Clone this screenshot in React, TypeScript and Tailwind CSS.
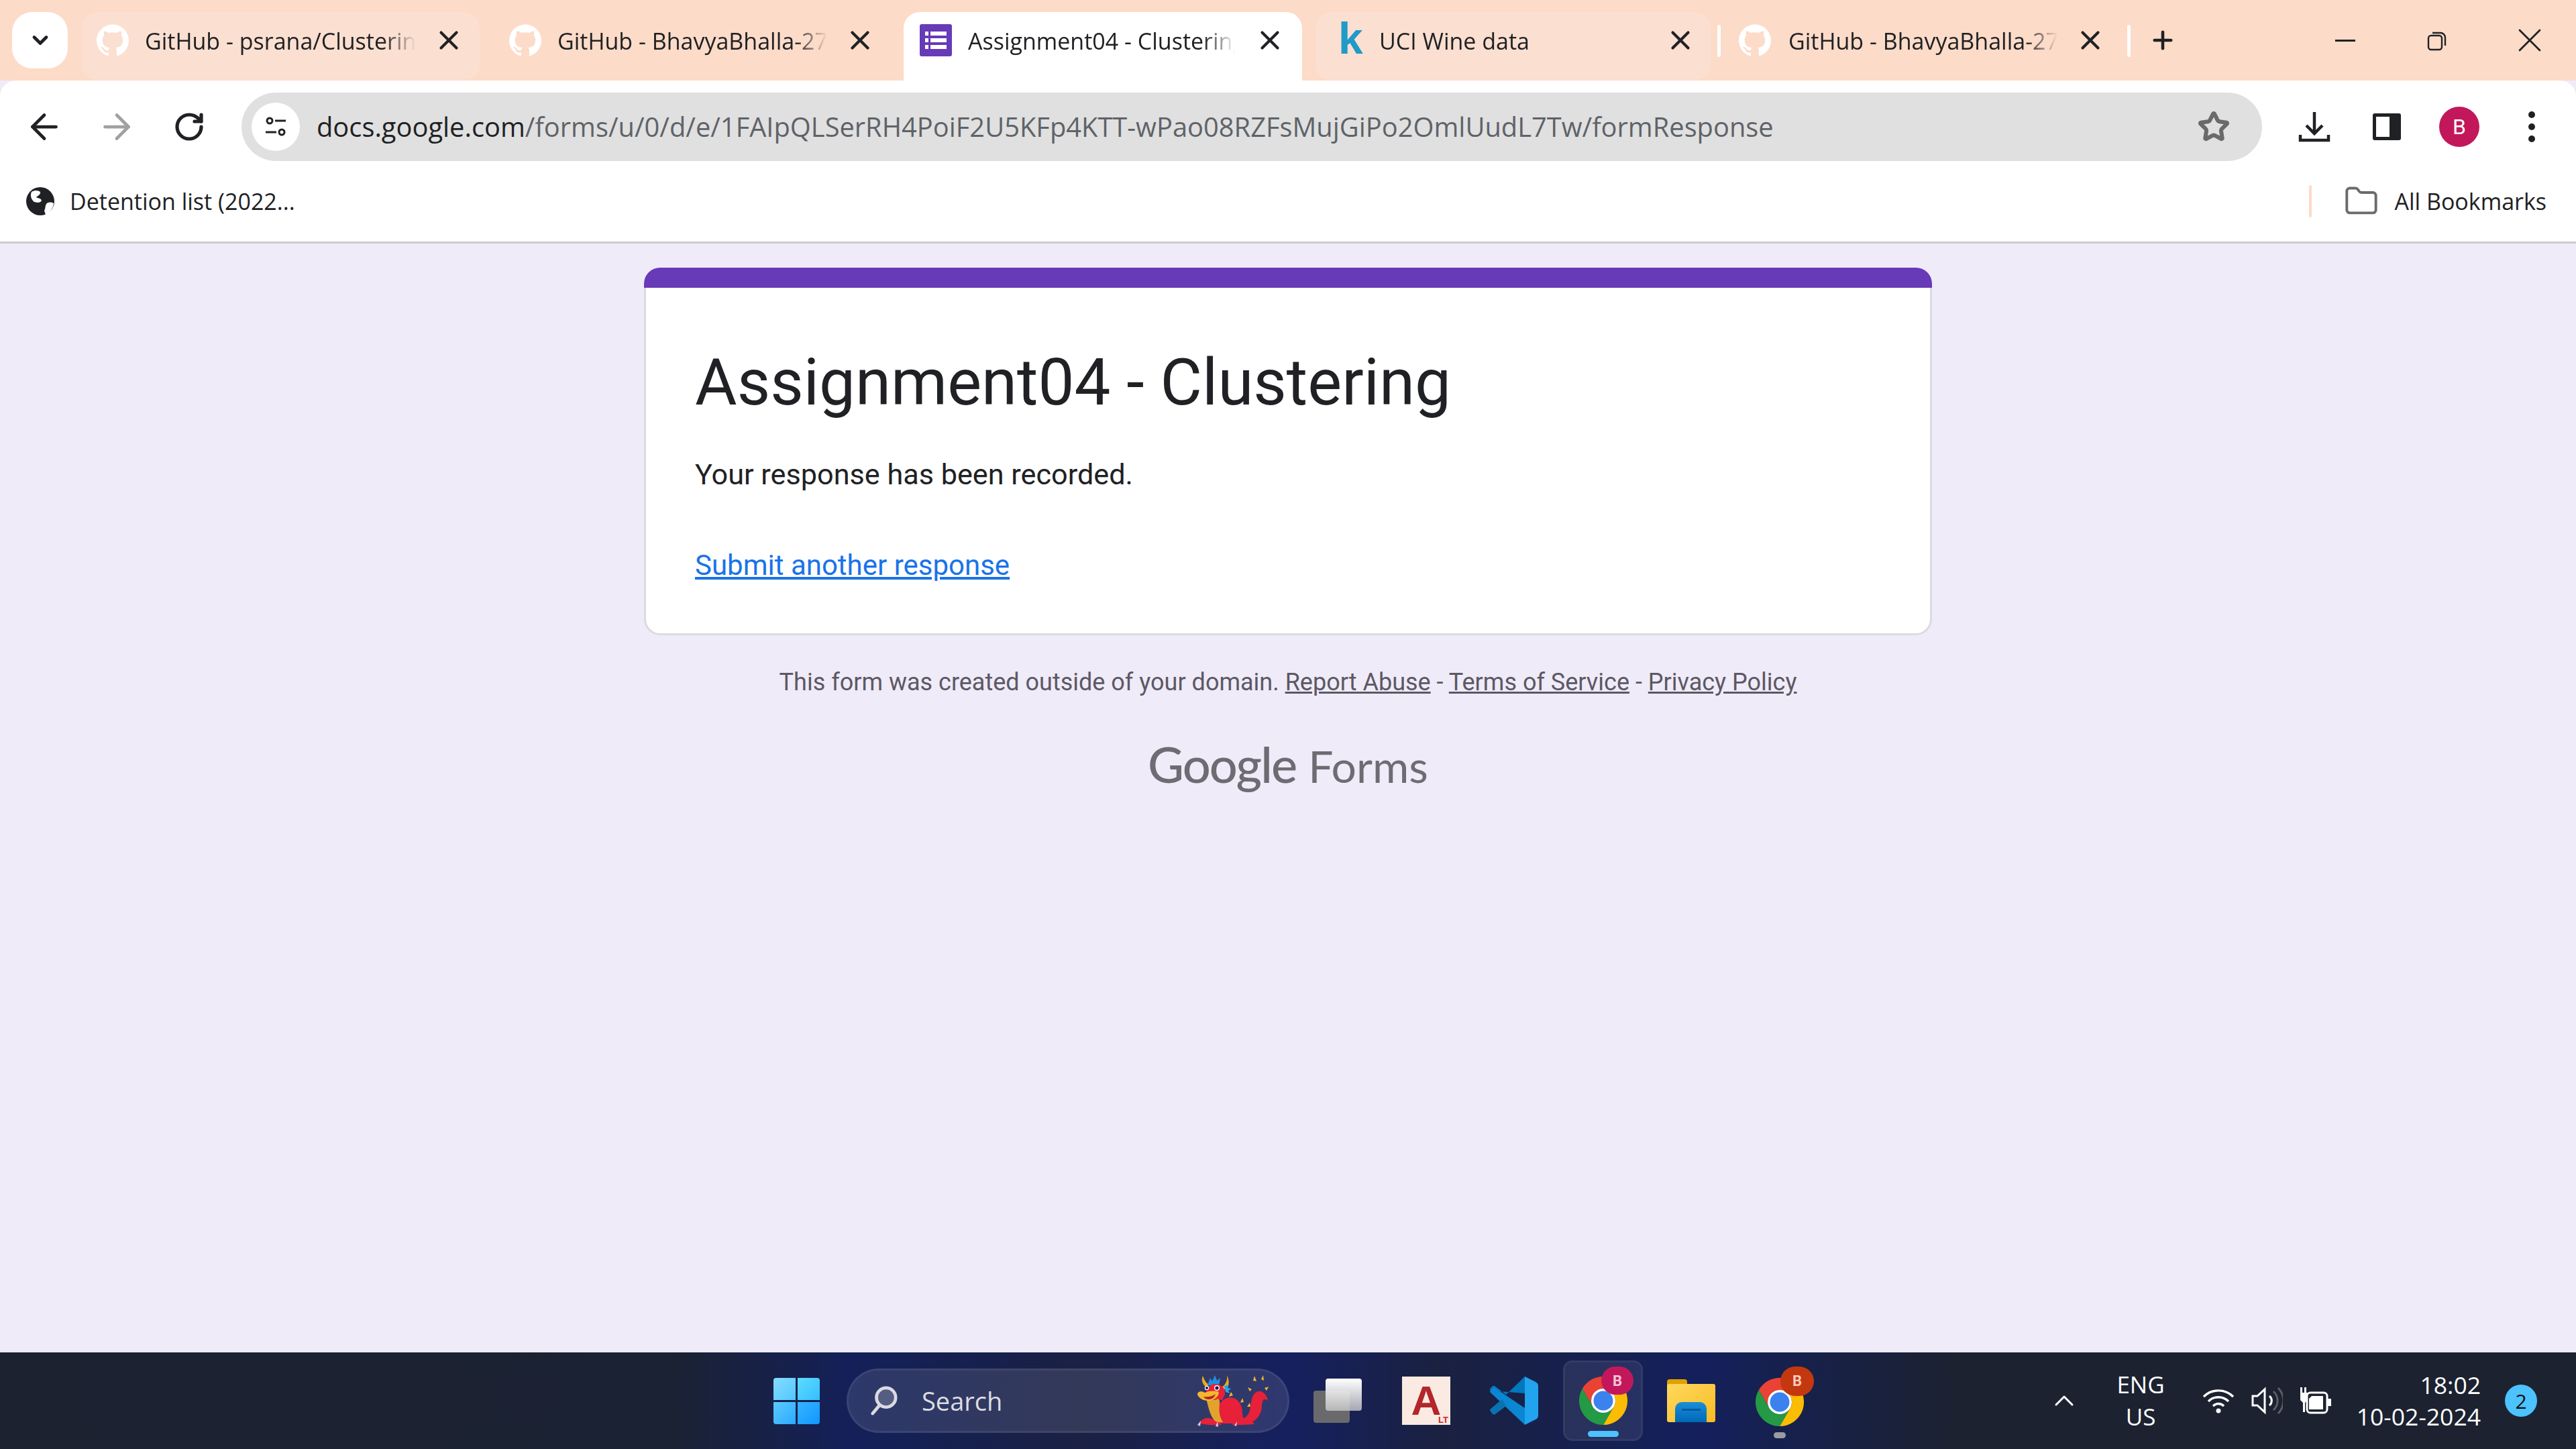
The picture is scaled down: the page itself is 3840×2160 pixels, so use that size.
import React from "react";
import { ArrowLeft, ArrowRight, RotateCw, Star, Plus, X, ChevronDown, ChevronUp, Folder } from "lucide-react";
import { SiGithub } from "react-icons/si";

const ui = "font-['Open_Sans','Noto_Sans',sans-serif]";

const ChromeIcon = () => (
  <svg viewBox="0 0 72 72" className="w-[72px] h-[72px]">
    <path fill="#ea4335" d="M36 18H67.2A36 36 0 0 0 4.8 18L20.4 45A18 18 0 0 1 36 18Z" />
    <path fill="#fbbc04" transform="rotate(120 36 36)" d="M36 18H67.2A36 36 0 0 0 4.8 18L20.4 45A18 18 0 0 1 36 18Z" />
    <path fill="#249a45" transform="rotate(240 36 36)" d="M36 18H67.2A36 36 0 0 0 4.8 18L20.4 45A18 18 0 0 1 36 18Z" />
    <circle cx="36" cy="36" r="18" fill="#fff" />
    <circle cx="36" cy="36" r="14.5" fill="#3b82ef" />
  </svg>
);

const FormsIcon = () => (
  <svg viewBox="0 0 48 48" className="w-12 h-12 shrink-0">
    <rect width="48" height="48" rx="3" fill="#673ab7" />
    <path fill="#fff" d="M8 11h5v6H8zM16 11h24v6H16zM8 21h5v6H8zM16 21h24v6H16zM8 31h5v6H8zM16 31h24v6H16z" />
  </svg>
);

const Dragon = () => (
  <svg viewBox="0 0 107 78" className="w-[107px] h-[78px]">
    <path fill="#e8a820" d="M8 2c-3 6 0 14 6 17l3-4C12 12 10 7 8 2ZM44 1c1 8-2 14-8 18l3 4c8-3 10-12 5-22Z" />
    <path fill="#1f8fe0" d="M15 16 19 5l3 5 4-9 3 8 5-4-2 12Z" />
    <path fill="#2ea5e8" d="M40 17l7-2-2 5 5 1-4 3 2 4-6-2Z" />
    <path fill="#f3b62c" d="M47 33l3-7 3 5ZM64 42l3-7 2 6ZM78 25l-3-6 6 3ZM83 9l2-7 3 8ZM95 7l3-6 1 8ZM100 20l6-2-3 6ZM74 48l4-6 1 6ZM79 58l3-5 1 6Z" />
    <path fill="#e8203a" d="M13 30c-1-9 5-16 14-16s15 7 14 16l-4 8-20-1Z" />
    <path fill="#e8203a" d="M26 62c1-10 8-24 18-27 11-3 19 4 22 14 1 6 1 12 2 16 6-1 10-8 11-17 1-11 4-22 12-23 7-1 13 6 14 14-2-2-5-3-7-1-3 5-1 15-5 21-3 6-9 12-18 14H41l-13-1Z" />
    <path fill="#e8203a" d="M3 73c2-6 9-9 15-8l15 6 3 4H16l-6-1ZM52 75c1-6 7-10 13-9l17 4 3 4-17 1Z" />
    <path fill="#e3a22c" d="M13 36c4 3 11 3 18 0 3 3 2 5 2 7-1 10-1 19 5 28-7 1-12-1-14-4-6-9-8-20-11-31Z" />
    <path fill="#f5b62d" d="M0 30c0-5 6-6 11-3 5-3 14-3 20-2 3 4-3 12-11 14-8 1-17-2-20-9Z" />
    <path fill="#b3202f" d="M9 33c6 1 13 0 18-4-2 6-6 8-10 8-3 0-6-1-8-4Z" />
    <circle cx="14" cy="20" r="3.2" fill="#fff" /><circle cx="14" cy="20" r="2" fill="#1a1a40" />
    <circle cx="29" cy="20" r="4" fill="#fff" /><circle cx="29" cy="20" r="2.6" fill="#1a1a40" />
    <path fill="#d6c8e8" d="M0 75l5-6-1 8ZM27 77l3-7 1 8ZM55 76l4-6-1 7Z" />
  </svg>
);

const Tab = ({ w, ml = "", icon, title, active = false, hover = false, iconGap, closeGap }: any) => (
  <div
    className={`relative flex items-start h-full shrink-0 ${w} ${ml} ${active ? "bg-white rounded-t-[24px]" : hover ? "h-[84px] bg-[#fbdfd0] rounded-[24px]" : ""}`}
  >
    <div className="flex items-center h-[84px] w-full">
      <div className={`flex items-center justify-center shrink-0 ${iconGap}`}>{icon}</div>
      <span className={`flex-1 overflow-hidden whitespace-nowrap text-[#202124] text-[34px] leading-[48px] pt-[2px] ${ui} [mask-image:linear-gradient(to_right,#000_88%,transparent_100%)]`}>
        {title}
      </span>
      <X className={`shrink-0 w-[46px] h-[46px] text-[#202124] ${closeGap}`} strokeWidth={2.2} />
    </div>
  </div>
);

const Ghub = () => <SiGithub className="w-12 h-12 text-white" />;

const TabStrip = () => (
  <div className="flex items-start h-[120px] shrink-0 bg-[#fcdbc8] pt-[18px] pl-[18px]">
    <div className="w-[83px] h-[84px] shrink-0 rounded-[30px] bg-white flex items-center justify-center">
      <ChevronDown className="w-[36px] h-[36px] text-[#202124]" strokeWidth={3.2} />
    </div>
    <Tab w="w-[593px]" ml="ml-[21px]" hover iconGap="pl-[22px] pr-[24px]" closeGap="ml-[26px] mr-[23px]" icon={<Ghub />} title="GitHub - psrana/Clustering-Methods" />
    <Tab w="w-[613px]" ml="ml-[19px]" iconGap="pl-[25px] pr-[24px]" closeGap="ml-[26px] mr-[42px]" icon={<Ghub />} title="GitHub - BhavyaBhalla-27/Clustering" />
    <Tab w="w-[594px]" active iconGap="pl-[24px] pr-[24px]" closeGap="ml-[29px] mr-[25px]" icon={<FormsIcon />} title="Assignment04 - Clustering" />
    <Tab w="w-[589px]" ml="ml-[20px]" hover iconGap="pl-[34px] pr-[36px]" closeGap="ml-[26px] mr-[22px]" icon={<span className="block w-[25px] text-[66px] leading-[60px] -mt-[6px] font-bold text-[#1f9ac9] font-['Liberation_Sans',sans-serif]">k</span>} title="UCI Wine data" />
    <div className="w-[5px] h-[48px] mt-[19px] ml-[10px] rounded bg-white shrink-0" />
    <Tab w="w-[579px]" ml="ml-[27px]" iconGap="pl-[0px] pr-[26px]" closeGap="ml-[26px] mr-[32px]" icon={<Ghub />} title="GitHub - BhavyaBhalla-27/Clustering" />
    <div className="w-[5px] h-[48px] mt-[19px] rounded bg-white shrink-0" />
    <Plus className="w-[42px] h-[42px] mt-[21px] ml-[27px] text-[#202124] shrink-0" strokeWidth={2.6} />
    <div className="flex-1 flex justify-end items-start">
      <div className="w-[30px] h-[3px] mt-[41px] bg-[#202124]" />
      <svg viewBox="0 0 30 30" className="w-[30px] h-[30px] mt-[28px] ml-[107px] text-[#202124]" fill="none" stroke="currentColor" strokeWidth="2.4">
        <rect x="2" y="7" width="20" height="21" rx="4" />
        <path d="M8 3h12a7 7 0 0 1 7 7v12" />
      </svg>
      <X className="w-[60px] h-[60px] mt-[12px] ml-[93px] mr-[39px] text-[#202124]" strokeWidth={1.1} />
    </div>
  </div>
);

const Toolbar = () => (
  <div className="flex items-center h-[120px] shrink-0 bg-white rounded-t-[24px] pt-[18px]">
    <ArrowLeft className="w-[60px] h-[60px] ml-[36px] text-[#202124]" strokeWidth={1.9} />
    <ArrowRight className="w-[60px] h-[60px] ml-[48px] text-[#a0a0a2]" strokeWidth={1.9} />
    <RotateCw className="w-[48px] h-[48px] ml-[54px] text-[#202124]" strokeWidth={2.6} />
    <div className="flex items-center h-[102px] w-[3012px] ml-[54px] rounded-[51px] bg-[#e0e0e0]">
      <div className="w-[72px] h-[72px] ml-[15px] rounded-full bg-white flex items-center justify-center shrink-0">
        <svg viewBox="0 0 36 36" className="w-[36px] h-[36px]" fill="none" stroke="#202124" strokeWidth="3">
          <circle cx="9" cy="9" r="4" />
          <path d="M17 9h16M3 26h16" />
          <circle cx="27" cy="26" r="4" />
        </svg>
      </div>
      <span className={`ml-[25px] flex-1 whitespace-nowrap text-[39.85px] ${ui} text-[#5f6368]`}>
        <span className="text-[#202124]">docs.google.com</span>/forms/u/0/d/e/1FAIpQLSerRH4PoiF2U5KFp4KTT-wPao08RZFsMujGiPo2OmlUudL7Tw/formResponse
      </span>
      <Star className="w-[48px] h-[48px] mr-[48px] text-[#6a6a6c]" strokeWidth={3} />
    </div>
    <svg viewBox="0 0 48 48" className="w-[48px] h-[48px] ml-[54px]" fill="none" stroke="#202124" strokeWidth="4.5">
      <path d="M24 2v30M12 22l12 12 12-12" />
      <path d="M3 36v8h42v-8" />
    </svg>
    <svg viewBox="0 0 44 44" className="w-[44px] h-[44px] ml-[62px]">
      <rect x="1" y="2" width="42" height="40" rx="3" fill="#202124" />
      <rect x="6" y="7" width="20" height="30" fill="#fff" />
    </svg>
    <div className="w-[60px] h-[60px] ml-[56px] rounded-full bg-[#c2185b] flex items-center justify-center text-white text-[32px] font-['Roboto',sans-serif]">B</div>
    <svg viewBox="0 0 12 48" className="w-[12px] h-[48px] ml-[72px]" fill="#202124">
      <circle cx="6" cy="6" r="5" /><circle cx="6" cy="24" r="5" /><circle cx="6" cy="42" r="5" />
    </svg>
  </div>
);

const BookmarksBar = () => (
  <div className="flex items-center h-[123px] shrink-0 bg-white border-b-[3px] border-[#cdcdcd]">
    <svg viewBox="0 0 42 42" className="w-[42px] h-[42px] ml-[39px]">
      <circle cx="21" cy="21" r="21" fill="#202124" />
      <path fill="#fff" d="M8 7c6-3 10-2 13 0 1 4-4 6-6 8 3 2 7 1 8 5-2 4-8 3-11 2C9 20 5 14 8 7ZM41 24c-4-2-8-2-11 1-2 3-1 7-3 10l2 6c6-2 11-9 12-17Z" />
    </svg>
    <span className={`ml-[23px] text-[34px] text-[#202124] ${ui}`}>Detention list (2022...</span>
    <div className="flex-1" />
    <div className="w-[4px] h-[48px] bg-[#fcdbc8] rounded" />
    <Folder className="w-[52px] h-[52px] ml-[48px] text-[#6b6b6d]" strokeWidth={1.8} />
    <span className={`ml-[23px] mr-[44px] text-[34px] text-[#202124] ${ui}`}>All Bookmarks</span>
  </div>
);

const FormCard = () => (
  <div className="w-[1920px] mx-auto mt-[36px] font-['Roboto',sans-serif]">
    <div className="h-[30px] rounded-t-[24px] bg-[#673ab7]" />
    <div className="h-[518px] bg-white border-x-[3px] border-b-[3px] border-[#dadce0] rounded-b-[24px] pl-[73px] pt-[81px]">
      <div className="text-[96px] leading-[120px] text-[#202124]">Assignment04 - Clustering</div>
      <div className="mt-[48px] text-[43.2px] leading-[60px] text-[#202124]">Your response has been recorded.</div>
      <a className="block mt-[75px] text-[42px] leading-[60px] text-[#1a73e8] underline">Submit another response</a>
    </div>
  </div>
);

const Footer = () => (
  <div className="w-[1920px] mx-auto flex flex-col items-center">
    <div className="mt-[46px] text-[36px] leading-[48px] text-[#5c5864] font-['Roboto',sans-serif]">
      This form was created outside of your domain. <a className="underline">Report Abuse</a> - <a className="underline">Terms of Service</a> - <a className="underline">Privacy Policy</a>
    </div>
    <div className="mt-[53px] flex items-baseline text-[#6e6c73] font-['Lato',sans-serif] leading-[90px]">
      <span className="text-[74px] font-medium tracking-[-2px]">Google</span>
      <span className="ml-[18px] text-[66px]">Forms</span>
    </div>
  </div>
);

const Taskbar = () => (
  <div className="relative h-[144px] shrink-0 flex items-center bg-[linear-gradient(to_right,#1c2230_0%,#1b2233_26%,#142059_33%,#1a2144_42%,#16205f_50%,#1a2140_56%,#14205c_66%,#1c2230_76%,#1c2230_100%)]">
    <div className="grid grid-cols-2 gap-[3px] w-[69px] h-[69px] ml-[1153px] shrink-0">
      <div className="rounded-tl-[4px] bg-gradient-to-br from-[#86dcff] to-[#4dc8ff]" />
      <div className="rounded-tr-[4px] bg-gradient-to-br from-[#5cdcff] to-[#36bdff]" />
      <div className="rounded-bl-[4px] bg-gradient-to-br from-[#5acbff] to-[#29aaff]" />
      <div className="rounded-br-[4px] bg-gradient-to-br from-[#34b4ff] to-[#0f97ff]" />
    </div>
    <div className="relative flex items-center w-[660px] h-[96px] ml-[40px] rounded-[48px] bg-[#ffffff1c] border-[3px] border-[#ffffff10] shrink-0">
      <svg viewBox="0 0 42 48" className="w-[40px] h-[46px] ml-[33px] shrink-0" fill="none" stroke="#dadbe2" strokeWidth="5">
        <circle cx="24" cy="19" r="15" fill="#ffffff30" />
        <path d="M13 32 3 44" strokeLinecap="round" />
      </svg>
      <span className="ml-[36px] text-[38px] text-[#dcdde2] font-['Open_Sans',sans-serif]">Search</span>
      <div className="absolute right-[27px] top-[6px]"><Dragon /></div>
    </div>
    <div className="relative ml-[36px] w-[72px] h-[66px] shrink-0">
      <div className="absolute left-0 bottom-0 w-[54px] h-[48px] rounded-[4px] bg-[#6a6a6c]" />
      <div className="absolute right-0 top-0 w-[54px] h-[48px] rounded-[4px] bg-gradient-to-b from-white to-[#c8c8c8cc]" />
    </div>
    <div className="relative ml-[60px] w-[72px] h-[72px] shrink-0 bg-[#faeae2] flex items-center justify-center">
      <span className="text-[62px] leading-none font-bold text-[#b3262a] font-['Liberation_Sans',sans-serif]">A</span>
      <span className="absolute right-[3px] bottom-[1px] text-[13px] leading-none font-bold text-[#d2232a] font-['Liberation_Sans',sans-serif]">LT</span>
    </div>
    <svg viewBox="0 0 72 72" className="w-[72px] h-[72px] ml-[59px] shrink-0">
      <path fill="#22a3ee" d="M52 0 68 8Q72 10 72 14V58Q72 62 68 64L52 72Z" />
      <path fill="#0078bd" d="M52 0 24 27 7 14Q5 13 3 15L1 17Q-1 19 1 21L52 25Z" />
      <path fill="#0a86d2" d="M52 72 1 24Q-1 22 2 20L6 16 52 47Z" />
      <path fill="#0a72b0" d="M1 48Q-1 50 1 52L3 55Q6 58 8 56L24 44 18 34Z" />
    </svg>
    <div className="relative ml-[37px] w-[119px] h-[120px] rounded-[14px] bg-[#ffffff14] border-[3px] border-[#ffffff0c] flex flex-col items-center pt-[21px] shrink-0">
      <ChromeIcon />
      <div className="absolute right-[11px] top-[6px] w-[48px] h-[42px] rounded-full bg-[#c2185b] flex items-center justify-center text-[#f4c6d8] text-[22px] font-bold font-['Roboto',sans-serif]">B</div>
      <div className="mt-[9px] w-[46px] h-[9px] rounded-[5px] bg-[#4cc2ff]" />
    </div>
    <div className="relative ml-[36px] w-[72px] h-[64px] shrink-0">
      <div className="absolute left-0 top-0 w-[30px] h-[20px] rounded-t-[4px] bg-[#e0a000]" />
      <div className="absolute left-0 top-[7px] w-[72px] h-[57px] rounded-[3px] bg-gradient-to-br from-[#ffd85c] to-[#f8bc1c]" />
      <div className="absolute left-[12px] bottom-0 w-[47px] h-[30px] rounded-t-[10px] bg-gradient-to-b from-[#1b8fd8] to-[#0068b8] flex justify-center pt-[10px]">
        <div className="w-[28px] h-[3px] bg-[#0a5a9c]" />
      </div>
    </div>
    <div className="relative ml-[60px] w-[72px] flex flex-col items-center pt-[21px] shrink-0">
      <ChromeIcon />
      <div className="absolute -right-[15px] top-[4px] w-[50px] h-[44px] rounded-full bg-[#c4380f] flex items-center justify-center text-[#f6cdbb] text-[22px] font-bold font-['Roboto',sans-serif]">B</div>
      <div className="mt-[9px] w-[18px] h-[9px] rounded-[5px] bg-[#9a9ba3]" />
    </div>
    <ChevronUp className="w-[48px] h-[48px] ml-[364px] text-white shrink-0" strokeWidth={1.5} />
    <div className={`ml-[54px] w-[72px] text-center text-[35px] leading-[48px] text-white ${ui} shrink-0`}>
      <div>ENG</div>
      <div>US</div>
    </div>
    <svg viewBox="0 0 48 40" className="w-[48px] h-[40px] ml-[56px] shrink-0" fill="none" stroke="#fff" strokeWidth="3.4">
      <path d="M2 14a31 31 0 0 1 44 0M9 21a21 21 0 0 1 30 0M16 28a11 11 0 0 1 16 0" />
      <circle cx="24" cy="35" r="3.5" fill="#fff" stroke="none" />
    </svg>
    <svg viewBox="0 0 48 48" className="w-[48px] h-[48px] ml-[24px] shrink-0" fill="none" strokeWidth="3">
      <path stroke="#fff" d="M3 17h7l11-10v34L10 31H3Z" />
      <path stroke="#fff" d="M28 17a9 9 0 0 1 0 14" />
      <path stroke="#5b5e66" d="M34 10a19 19 0 0 1 0 28M41 5a27 27 0 0 1 0 38" />
    </svg>
    <svg viewBox="0 0 48 42" className="w-[48px] h-[42px] ml-[24px] shrink-0">
      <path fill="#fff" d="M2 1h3v8h3V1h3v8h2v11l-4 4v14H6V24L2 20Z" />
      <rect x="12" y="9" width="30" height="30" rx="5" fill="none" stroke="#fff" strokeWidth="3" />
      <path fill="#fff" d="M19 14h17v20H15V18ZM43 18h5v11h-5Z" />
    </svg>
    <div className={`flex-1 mr-[36px] text-right text-[35.5px] leading-[47px] text-white ${ui}`}>
      <div>18:02</div>
      <div>10-02-2024</div>
    </div>
    <div className="w-[48px] h-[48px] mr-[58px] rounded-full bg-[#4cc2ff] flex items-center justify-center text-[#101010] text-[30px] font-['Open_Sans',sans-serif] shrink-0">2</div>
  </div>
);

export default function App() {
  return (
    <div className="flex flex-col h-screen w-screen overflow-hidden bg-[#efebf8]">
      <TabStrip />
      <Toolbar />
      <BookmarksBar />
      <main className="flex-1">
        <FormCard />
        <Footer />
      </main>
      <Taskbar />
    </div>
  );
}
